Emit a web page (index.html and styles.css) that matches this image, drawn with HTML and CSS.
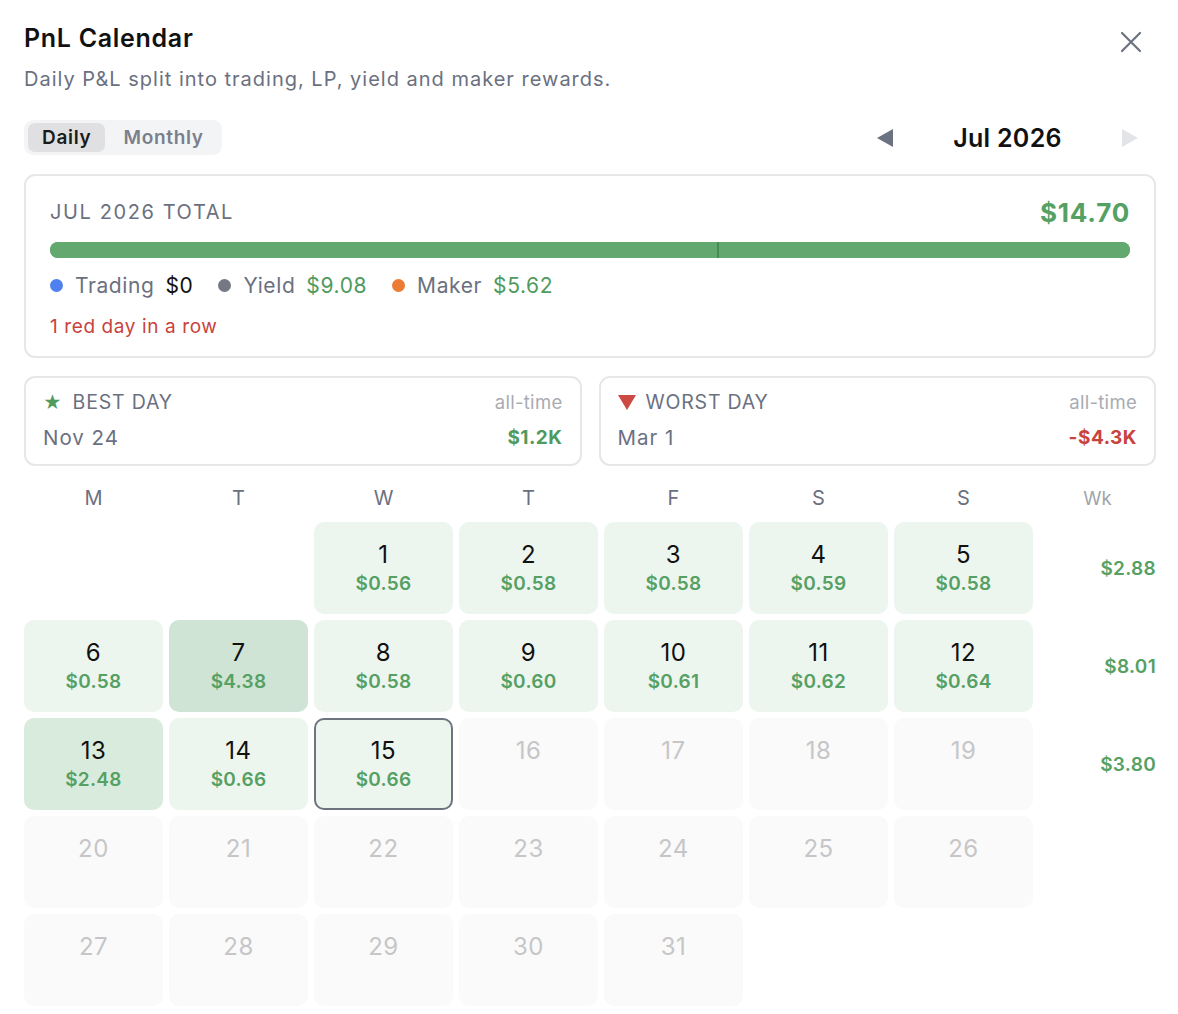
FILE: index.html
```html
<!DOCTYPE html>
<html lang="en">
<head>
<meta charset="utf-8">
<title>PnL Calendar</title>
<link rel="stylesheet" href="styles.css">
</head>
<body>
<div class="panel">
  <div class="head">
    <h1 class="title">PnL Calendar</h1>
    <button class="close" aria-label="Close">
      <svg width="22" height="22" viewBox="0 0 22 22"><path d="M2 2L20 20M20 2L2 20" stroke="#6b7280" stroke-width="2.2" stroke-linecap="round"/></svg>
    </button>
  </div>
  <p class="subtitle">Daily P&amp;L split into trading, LP, yield and maker rewards.</p>

  <div class="controls">
    <div class="toggle">
      <span class="tab active">Daily</span>
      <span class="tab">Monthly</span>
    </div>
    <div class="nav">
      <button class="navbtn"><svg width="16" height="18" viewBox="0 0 16 18"><polygon points="16,0 16,18 0,9" fill="#6b7280"/></svg></button>
      <span class="month">Jul 2026</span>
      <button class="navbtn"><svg width="16" height="18" viewBox="0 0 16 18"><polygon points="0,0 0,18 16,9" fill="#e2e4e8"/></svg></button>
    </div>
  </div>

  <section class="card total">
    <div class="total-row">
      <span class="total-label">JUL 2026 TOTAL</span>
      <span class="total-value">$14.70</span>
    </div>
    <div class="bar">
      <div class="seg" style="width:61.77%"></div>
      <div class="seg last" style="width:38.23%"></div>
    </div>
    <div class="legend">
      <span class="item"><i class="dot blue"></i><span class="lbl">Trading</span><span class="val zero">$0</span></span>
      <span class="item"><i class="dot gray"></i><span class="lbl">Yield</span><span class="val">$9.08</span></span>
      <span class="item"><i class="dot orange"></i><span class="lbl">Maker</span><span class="val">$5.62</span></span>
    </div>
    <div class="streak">1 red day in a row</div>
  </section>

  <div class="extremes">
    <section class="card ext">
      <div class="ext-row">
        <span class="ext-label"><span class="star">★</span>BEST DAY</span>
        <span class="alltime">all-time</span>
      </div>
      <div class="ext-row">
        <span class="ext-date">Nov 24</span>
        <span class="ext-val pos">$1.2K</span>
      </div>
    </section>
    <section class="card ext">
      <div class="ext-row">
        <span class="ext-label"><svg class="tri" width="18" height="15" viewBox="0 0 18 15"><polygon points="0,0 18,0 9,15" fill="#cc4a43"/></svg>WORST DAY</span>
        <span class="alltime">all-time</span>
      </div>
      <div class="ext-row">
        <span class="ext-date">Mar 1</span>
        <span class="ext-val neg">-$4.3K</span>
      </div>
    </section>
  </div>

  <div class="cal">
    <div class="dow">M</div><div class="dow">T</div><div class="dow">W</div><div class="dow">T</div><div class="dow">F</div><div class="dow">S</div><div class="dow">S</div><div class="dow wk">Wk</div>

    <div class="blank"></div><div class="blank"></div>
    <div class="day"><span class="num">1</span><span class="amt">$0.56</span></div>
    <div class="day"><span class="num">2</span><span class="amt">$0.58</span></div>
    <div class="day"><span class="num">3</span><span class="amt">$0.58</span></div>
    <div class="day"><span class="num">4</span><span class="amt">$0.59</span></div>
    <div class="day"><span class="num">5</span><span class="amt">$0.58</span></div>
    <div class="wkval">$2.88</div>

    <div class="day"><span class="num">6</span><span class="amt">$0.58</span></div>
    <div class="day hot"><span class="num">7</span><span class="amt">$4.38</span></div>
    <div class="day"><span class="num">8</span><span class="amt">$0.58</span></div>
    <div class="day"><span class="num">9</span><span class="amt">$0.60</span></div>
    <div class="day"><span class="num">10</span><span class="amt">$0.61</span></div>
    <div class="day"><span class="num">11</span><span class="amt">$0.62</span></div>
    <div class="day"><span class="num">12</span><span class="amt">$0.64</span></div>
    <div class="wkval">$8.01</div>

    <div class="day warm"><span class="num">13</span><span class="amt">$2.48</span></div>
    <div class="day"><span class="num">14</span><span class="amt">$0.66</span></div>
    <div class="day today"><span class="num">15</span><span class="amt">$0.66</span></div>
    <div class="day future"><span class="num">16</span></div>
    <div class="day future"><span class="num">17</span></div>
    <div class="day future"><span class="num">18</span></div>
    <div class="day future"><span class="num">19</span></div>
    <div class="wkval">$3.80</div>

    <div class="day future"><span class="num">20</span></div>
    <div class="day future"><span class="num">21</span></div>
    <div class="day future"><span class="num">22</span></div>
    <div class="day future"><span class="num">23</span></div>
    <div class="day future"><span class="num">24</span></div>
    <div class="day future"><span class="num">25</span></div>
    <div class="day future"><span class="num">26</span></div>
    <div class="wkval"></div>

    <div class="day future"><span class="num">27</span></div>
    <div class="day future"><span class="num">28</span></div>
    <div class="day future"><span class="num">29</span></div>
    <div class="day future"><span class="num">30</span></div>
    <div class="day future"><span class="num">31</span></div>
  </div>
</div>
</body>
</html>
```

FILE: styles.css
```css
* { box-sizing: border-box; }
html, body { margin: 0; padding: 0; background: #fff; }
body {
  font-family: Inter, "Noto Sans", "Liberation Sans", sans-serif;
  color: #111;
}
.panel { padding: 23px 22px 0 24px; width: 1178px; }

.head { display: flex; justify-content: space-between; align-items: center; height: 30px; }
.title { margin: 0; font-size: 25px; line-height: 30px; font-weight: 600; color: #111; letter-spacing: 0.7px; }
.close { background: none; border: 0; padding: 0; width: 22px; height: 22px; margin: 8px 14px 0 0; cursor: pointer; display: flex; }

.subtitle { margin: 12px 0 0; font-size: 20px; line-height: 28px; color: #6b7080; letter-spacing: 1px; }

.controls { display: flex; justify-content: space-between; align-items: center; margin-top: 27px; }
.toggle { display: flex; background: #f3f4f6; border-radius: 9px; padding: 3px 4px; height: 35px; align-items: center; }
.tab { font-size: 19px; font-weight: 600; color: #7a7f8c; padding: 0 14px; height: 29px; line-height: 29px; border-radius: 7px; letter-spacing: 0.7px; }
.tab.active { background: #e0e0e2; color: #1a1a1a; }
.tab + .tab { padding: 0 14px 0 18px; }

.nav { display: flex; align-items: center; }
.navbtn { background: none; border: 0; padding: 0; width: 52px; height: 34px; display: flex; align-items: center; justify-content: center; }
.month { width: 193px; text-align: center; font-size: 25px; font-weight: 600; color: #111; letter-spacing: 0.3px; }

.card { border: 2px solid #e6e7e9; border-radius: 11px; background: #fff; }
.total { margin-top: 19px; padding: 20px 24px 17px; }
.total-row { display: flex; justify-content: space-between; align-items: center; height: 32px; }
.total-label { font-size: 20px; color: #6b7080; letter-spacing: 1.6px; }
.total-value { font-size: 26px; font-weight: 700; color: #55a063; letter-spacing: 0.8px; }
.bar { display: flex; height: 16px; border-radius: 8px; overflow: hidden; margin-top: 14px; background: #63a86f; }
.seg { background: #63a86f; height: 100%; }
.seg.last { border-left: 2px solid #4a8a56; }

.legend { display: flex; align-items: center; margin-top: 13px; height: 28px; gap: 25px; }
.item { display: flex; align-items: center; font-size: 21px; letter-spacing: 0.6px; }
.dot { width: 13px; height: 13px; border-radius: 50%; display: inline-block; margin-right: 12px; }
.dot.blue { background: #4f80f0; }
.dot.gray { background: #737884; }
.dot.orange { background: #eb7b35; }
.lbl { color: #6b7080; margin-right: 11px; }
.val { color: #4f9a5e; }
.val.zero { color: #111; }
.streak { margin-top: 16px; font-size: 19px; line-height: 24px; color: #c8433d; letter-spacing: 0.6px; }

.extremes { display: grid; grid-template-columns: 1fr 1fr; gap: 17px; margin-top: 18px; }
.ext { padding: 11px 17px 12px 17px; height: 90px; }
.ext-row { display: flex; justify-content: space-between; align-items: center; }
.ext-row:first-child { height: 26px; }
.ext-row + .ext-row { height: 28px; margin-top: 8px; }
.ext-label { font-size: 19.5px; color: #6b7080; letter-spacing: 0.8px; display: flex; align-items: center; }
.star { color: #4f9a5e; font-size: 18px; margin-right: 10px; }
.tri { margin-right: 10px; }
.alltime { font-size: 18.5px; color: #a8abb2; letter-spacing: 0.3px; }
.ext-date { font-size: 20.5px; color: #6b7080; letter-spacing: 1px; }
.ext-val { font-size: 19px; font-weight: 700; letter-spacing: 0.5px; }
.ext-val.pos { color: #4f9a5e; }
.ext-val.neg { color: #c8433d; }

.cal { display: grid; grid-template-columns: repeat(7, 139px) 117px; column-gap: 6px; row-gap: 6px; margin-top: 20px; }
.dow { text-align: center; font-size: 20px; line-height: 24px; color: #6b7080; margin-bottom: 6px; }
.dow.wk { color: #a0a4ab; font-size: 18.5px; }
.blank { height: 92px; }
.day { height: 92px; border-radius: 10px; background: #edf5ef; display: flex; flex-direction: column; align-items: center; padding-top: 18px; }
.day.hot { background: #cfe4d4; }
.day.warm { background: #d9ebdd; }
.day.today { border: 2px solid #6e737e; padding-top: 16px; }
.day.future { background: #fafafa; }
.num { font-size: 24px; line-height: 30px; color: #111; letter-spacing: 0.5px; }
.future .num { color: #c6c6c8; }
.amt { font-size: 19px; line-height: 24px; margin-top: 2px; font-weight: 600; color: #55a063; letter-spacing: 0.3px; }
.wkval { align-self: center; text-align: right; font-size: 19px; font-weight: 600; color: #55a063; letter-spacing: 0.3px; }
```
